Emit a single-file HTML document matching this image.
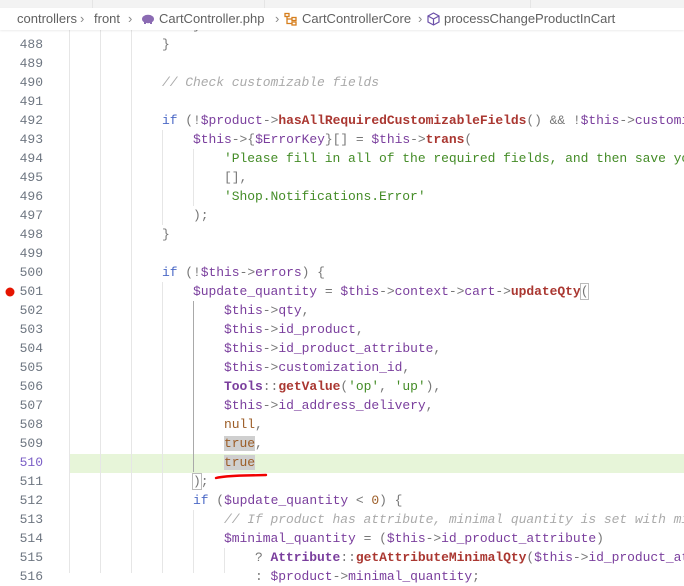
<!DOCTYPE html>
<html><head><meta charset="utf-8"><style>
body{margin:0;width:684px;height:573px;overflow:hidden;background:#fff;position:relative;font-family:"Liberation Sans",sans-serif}
.top{position:absolute;left:0;top:0;width:684px;height:8px;background:#f3f3f3;z-index:5}
.top i{position:absolute;top:0;height:8px;width:1px;background:#e5e5e5}
.bc{position:absolute;left:0;top:8px;width:684px;height:22px;background:#fff;z-index:5;font-size:13px;color:#616161;line-height:22px;white-space:nowrap;box-shadow:0 1px 2px rgba(0,0,0,.08)}
.bc span{position:absolute;top:0}
.ln{position:absolute;left:0;width:43px;text-align:right;font-family:"Liberation Mono",monospace;font-size:13px;color:#6e7681;height:19px;line-height:19px}
.c{position:absolute;left:69px;font-family:"Liberation Mono",monospace;font-size:13px;white-space:pre;height:19px;line-height:19px;color:#777;letter-spacing:-0.05px}
.g{position:absolute;width:1px;background:#e6e6e6}
.v{color:#7a3e9d}.k{color:#4b69c6}.f{color:#aa3731;font-weight:bold}.s{color:#448c27}.n{color:#9c5d27}.cm{color:#aaa;font-style:italic}.cl{color:#7a3e9d;font-weight:bold}
.hl{background:#cfcfcf}
</style></head><body>
<div class="top"><i style="left:92px"></i><i style="left:264px"></i><i style="left:530px"></i></div>
<div class="bc">
<span style="left:17px">controllers</span><span style="left:80px;color:#888">›</span>
<span style="left:94px">front</span><span style="left:128px;color:#888">›</span>
<svg style="position:absolute;left:141px;top:6px" width="14" height="10" viewBox="0 0 14 10"><ellipse cx="7" cy="5" rx="6" ry="4.2" fill="#8b6bb3"/><rect x="3" y="7" width="2" height="3" fill="#8b6bb3"/><rect x="9" y="7" width="2" height="3" fill="#8b6bb3"/></svg>
<span style="left:159px">CartController.php</span><span style="left:275px;color:#888">›</span>
<svg style="position:absolute;left:284px;top:4px" width="14" height="14" viewBox="0 0 14 14" fill="none" stroke="#d67e1c" stroke-width="1.3"><rect x="1" y="1.5" width="4" height="3"/><rect x="8" y="5.5" width="4" height="3"/><rect x="8" y="10" width="4" height="3"/><path d="M3 4.5V11.5H8M3 7H8"/></svg>
<span style="left:302px">CartControllerCore</span><span style="left:418px;color:#888">›</span>
<svg style="position:absolute;left:427px;top:4px" width="13" height="14" viewBox="0 0 13 14" fill="none" stroke="#6b4fa8" stroke-width="1.2"><path d="M6.5 1L12 4V10L6.5 13L1 10V4Z M1 4L6.5 7L12 4 M6.5 7V13"/></svg>
<span style="left:444px">processChangeProductInCart</span>
</div>

<div style="position:absolute;left:69px;top:454px;width:615px;height:19px;background:#e7f5d9"></div>
<div class="g" style="left:69px;top:28px;height:545px"></div>
<div class="g" style="left:100px;top:28px;height:545px"></div>
<div class="g" style="left:131px;top:28px;height:545px"></div>
<div class="g" style="left:162px;top:130px;height:95px"></div>
<div class="g" style="left:162px;top:282px;height:291px"></div>
<div class="g" style="left:193px;top:149px;height:57px"></div>
<div class="g" style="left:193px;top:301px;height:171px;background:#a9a9a9"></div>
<div class="g" style="left:193px;top:510px;height:63px"></div>
<div class="g" style="left:224px;top:548px;height:25px"></div>

<svg style="position:absolute;left:5px;top:287px" width="10" height="10"><circle cx="5" cy="5" r="4.5" fill="#e51400"/></svg>

<div class="ln" style="top:16px">487</div><div class="c" style="top:16px">                }</div>
<div class="ln" style="top:35px">488</div><div class="c" style="top:35px">            }</div>
<div class="ln" style="top:54px">489</div>
<div class="ln" style="top:73px">490</div><div class="c" style="top:73px">            <span class="cm">// Check customizable fields</span></div>
<div class="ln" style="top:92px">491</div>
<div class="ln" style="top:111px">492</div><div class="c" style="top:111px">            <span class="k">if</span> (!<span class="v">$product</span>-&gt;<span class="f">hasAllRequiredCustomizableFields</span>() &amp;&amp; !<span class="v">$this</span>-&gt;<span class="v">customi</span></div>
<div class="ln" style="top:130px">493</div><div class="c" style="top:130px">                <span class="v">$this</span>-&gt;{<span class="v">$ErrorKey</span>}[] = <span class="v">$this</span>-&gt;<span class="f">trans</span>(</div>
<div class="ln" style="top:149px">494</div><div class="c" style="top:149px">                    <span class="s">'Please fill in all of the required fields, and then save yo</span></div>
<div class="ln" style="top:168px">495</div><div class="c" style="top:168px">                    [],</div>
<div class="ln" style="top:187px">496</div><div class="c" style="top:187px">                    <span class="s">'Shop.Notifications.Error'</span></div>
<div class="ln" style="top:206px">497</div><div class="c" style="top:206px">                );</div>
<div class="ln" style="top:225px">498</div><div class="c" style="top:225px">            }</div>
<div class="ln" style="top:244px">499</div>
<div class="ln" style="top:263px">500</div><div class="c" style="top:263px">            <span class="k">if</span> (!<span class="v">$this</span>-&gt;<span class="v">errors</span>) {</div>
<div class="ln" style="top:282px">501</div><div class="c" style="top:282px">                <span class="v">$update_quantity</span> = <span class="v">$this</span>-&gt;<span class="v">context</span>-&gt;<span class="v">cart</span>-&gt;<span class="f">updateQty</span><span style="outline:1px solid #bbb">(</span></div>
<div class="ln" style="top:301px">502</div><div class="c" style="top:301px">                    <span class="v">$this</span>-&gt;<span class="v">qty</span>,</div>
<div class="ln" style="top:320px">503</div><div class="c" style="top:320px">                    <span class="v">$this</span>-&gt;<span class="v">id_product</span>,</div>
<div class="ln" style="top:339px">504</div><div class="c" style="top:339px">                    <span class="v">$this</span>-&gt;<span class="v">id_product_attribute</span>,</div>
<div class="ln" style="top:358px">505</div><div class="c" style="top:358px">                    <span class="v">$this</span>-&gt;<span class="v">customization_id</span>,</div>
<div class="ln" style="top:377px">506</div><div class="c" style="top:377px">                    <span class="cl">Tools</span>::<span class="f">getValue</span>(<span class="s">'op'</span>, <span class="s">'up'</span>),</div>
<div class="ln" style="top:396px">507</div><div class="c" style="top:396px">                    <span class="v">$this</span>-&gt;<span class="v">id_address_delivery</span>,</div>
<div class="ln" style="top:415px">508</div><div class="c" style="top:415px">                    <span class="n">null</span>,</div>
<div class="ln" style="top:434px">509</div><div class="c" style="top:434px">                    <span class="n hl">true</span>,</div>
<div class="ln" style="top:453px;color:#7b5fc6">510</div><div class="c" style="top:453px">                    <span class="n hl">true</span></div>
<div class="ln" style="top:472px">511</div><div class="c" style="top:472px">                <span style="outline:1px solid #bbb">)</span>;</div>
<div class="ln" style="top:491px">512</div><div class="c" style="top:491px">                <span class="k">if</span> (<span class="v">$update_quantity</span> &lt; <span class="n">0</span>) {</div>
<div class="ln" style="top:510px">513</div><div class="c" style="top:510px">                    <span class="cm">// If product has attribute, minimal quantity is set with mi</span></div>
<div class="ln" style="top:529px">514</div><div class="c" style="top:529px">                    <span class="v">$minimal_quantity</span> = (<span class="v">$this</span>-&gt;<span class="v">id_product_attribute</span>)</div>
<div class="ln" style="top:548px">515</div><div class="c" style="top:548px">                        ? <span class="cl">Attribute</span>::<span class="f">getAttributeMinimalQty</span>(<span class="v">$this</span>-&gt;<span class="v">id_product_at</span></div>
<div class="ln" style="top:567px">516</div><div class="c" style="top:567px">                        : <span class="v">$product</span>-&gt;<span class="v">minimal_quantity</span>;</div>

<svg style="position:absolute;left:214px;top:472px" width="56" height="10"><path d="M2 6 Q10 4 30 3.5 L52 3" stroke="#f00000" stroke-width="2.4" fill="none" stroke-linecap="round"/></svg>
</body></html>
